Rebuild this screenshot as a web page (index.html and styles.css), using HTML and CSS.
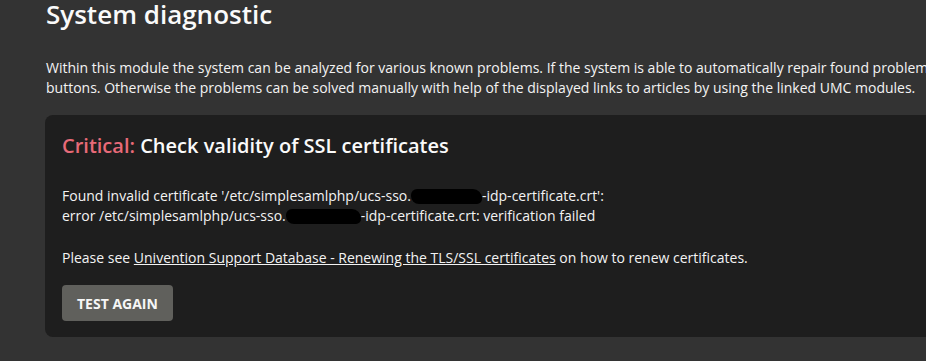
FILE: index.html
```html
<!DOCTYPE html>
<html lang="en">
<head>
    <meta charset="UTF-8">
    <meta name="viewport" content="width=device-width, initial-scale=1.0">
    <title>System diagnostic</title>
    <link rel="stylesheet" href="styles.css">
</head>
<body>
    <div class="page">
        <h1>System diagnostic</h1>
        <p class="intro">Within this module the system can be analyzed for various known problems. If the system is able to automatically repair found problems, it offers the possibility to do so with the help of the displayed<br>buttons. Otherwise the problems can be solved manually with help of the displayed links to articles by using the linked UMC modules.</p>

        <div class="card">
            <h2><span class="critical">Critical:</span> Check validity of SSL certificates</h2>
            <p class="msg">Found invalid certificate '/etc/simplesamlphp/ucs-sso.<span class="redact redact-a"></span>-idp-certificate.crt':<br>error /etc/simplesamlphp/ucs-sso.<span class="redact redact-b"></span>-idp-certificate.crt: verification failed</p>
            <p class="msg">Please see <a href="#">Univention Support Database - Renewing the TLS/SSL certificates</a> on how to renew certificates.</p>
            <button class="btn">Test again</button>
        </div>
    </div>
</body>
</html>
```

FILE: styles.css
```css
body {
    margin: 0;
    background: #333333;
    color: #f3f3f3;
    font-family: 'Open Sans', sans-serif;
    overflow: hidden;
}
.page {
    width: 1200px;
    padding-left: 46px;
}
h1 {
    margin: 0;
    font-size: 26px;
    line-height: 28px;
    font-weight: 600;
    color: #fafafa;
}
.intro {
    margin: 30px 0 0;
    font-size: 14px;
    line-height: 20px;
    white-space: nowrap;
}
.card {
    margin-top: 17px;
    margin-left: -1px;
    background: #1e1e1e;
    border-radius: 8px;
    padding: 17px 17px 16px;
}
h2 {
    margin: 0;
    font-size: 20px;
    line-height: 28px;
    font-weight: 600;
    color: #fafafa;
}
.critical {
    color: #e76a78;
}
.msg {
    margin: 26px 0 0;
    font-size: 14px;
    line-height: 20px;
}
.msg + .msg {
    margin-top: 22px;
}
.msg a {
    color: #f3f3f3;
}
.redact {
    display: inline-block;
    height: 15px;
    background: #000;
    border-radius: 6px 9px 5px 8px;
    vertical-align: -3px;
}
.redact-a {
    width: 71px;
}
.redact-b {
    width: 75px;
}
.btn {
    display: block;
    margin-top: 17px;
    height: 36px;
    padding: 0 15px;
    border: none;
    border-radius: 4px;
    background: #60605c;
    color: #f6f6f6;
    font-family: 'Open Sans', sans-serif;
    font-size: 14px;
    font-weight: 700;
    text-transform: uppercase;
    cursor: pointer;
}
```
